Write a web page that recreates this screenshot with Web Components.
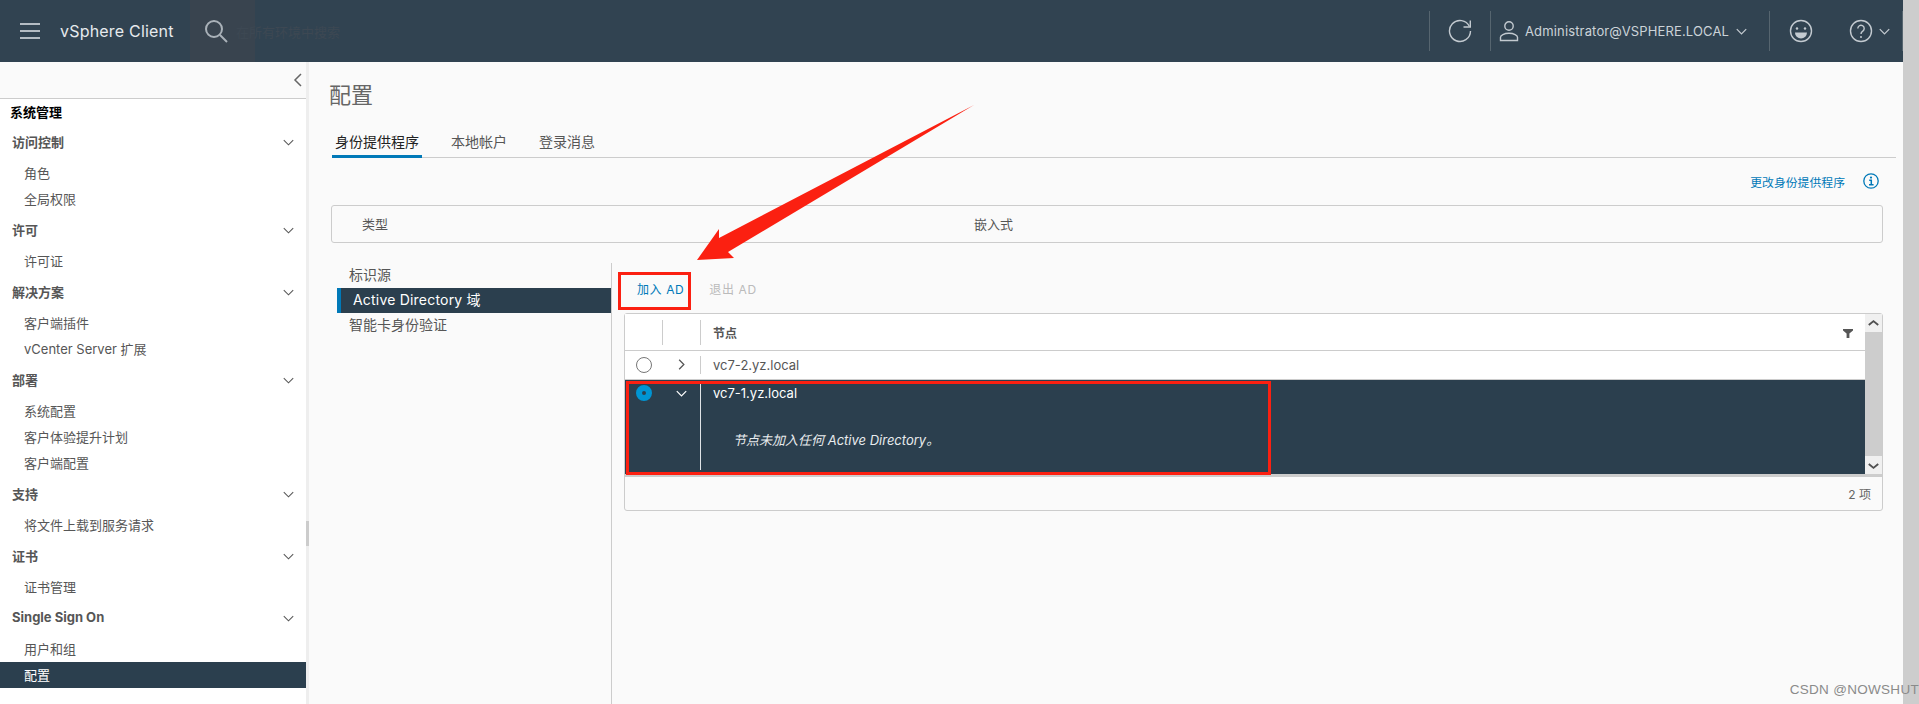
<!DOCTYPE html>
<html lang="zh-CN">
<head>
<meta charset="utf-8">
<title>vSphere Client</title>
<style>
    html, body {
        margin: 0;
        height: 704px;
        overflow: hidden;
        background: #fafafa;
        font-family: Inter, "Noto Sans CJK SC", sans-serif;
    }
</style>
</head>
<body>
<vs-app>
    <vs-header slot="header"></vs-header>
    <vs-sidebar slot="sidebar">
        <vs-nav-title>系统管理</vs-nav-title>
        <vs-nav-group label="访问控制"><vs-nav-item>角色</vs-nav-item><vs-nav-item>全局权限</vs-nav-item></vs-nav-group>
        <vs-nav-group label="许可"><vs-nav-item>许可证</vs-nav-item></vs-nav-group>
        <vs-nav-group label="解决方案"><vs-nav-item>客户端插件</vs-nav-item><vs-nav-item>vCenter Server 扩展</vs-nav-item></vs-nav-group>
        <vs-nav-group label="部署"><vs-nav-item>系统配置</vs-nav-item><vs-nav-item>客户体验提升计划</vs-nav-item><vs-nav-item>客户端配置</vs-nav-item></vs-nav-group>
        <vs-nav-group label="支持"><vs-nav-item>将文件上载到服务请求</vs-nav-item></vs-nav-group>
        <vs-nav-group label="证书"><vs-nav-item>证书管理</vs-nav-item></vs-nav-group>
        <vs-nav-group label="Single Sign On"><vs-nav-item>用户和组</vs-nav-item><vs-nav-item active>配置</vs-nav-item></vs-nav-group>
    </vs-sidebar>
    <vs-config-page slot="main"></vs-config-page>
</vs-app>
<vs-annotations></vs-annotations>

<script>
// Small chevron used all over the page, direction given by the points
const chevron = (points, color, size = 14, width = 1.5) => `
    <svg width="${size}" height="${size}" viewBox="0 0 14 14" fill="none" stroke="${color}" stroke-width="${width}">
        <polyline points="${points}"></polyline>
    </svg>`;
const CHEVRON_DOWN = '1,4 7,10 13,4';
const CHEVRON_RIGHT = '4,1 10,7 4,13';
const CHEVRON_LEFT = '10,1 4,7 10,13';

// Page frame: header, sidebar, main area and the window scrollbar
class VsApp extends HTMLElement {
    constructor() {
        super();
        this.attachShadow({ mode: 'open' });
        this.shadowRoot.innerHTML = `
            <style>
                :host {
                    display: grid;
                    grid-template-columns: 1fr 16px;
                    height: 704px;
                }
                .page {
                    display: flex;
                    flex-direction: column;
                    min-width: 0;
                }
                .body {
                    flex: 1;
                    display: flex;
                    min-height: 0;
                }
                .scrollbar {
                    background: #cdcdcd;
                }
            </style>
            <div class="page">
                <slot name="header"></slot>
                <div class="body">
                    <slot name="sidebar"></slot>
                    <slot name="main"></slot>
                </div>
            </div>
            <div class="scrollbar"></div>
        `;
    }
}

class VsHeader extends HTMLElement {
    constructor() {
        super();
        this.attachShadow({ mode: 'open' });
        this.shadowRoot.innerHTML = `
            <style>
                :host {
                    display: flex;
                    align-items: center;
                    height: 62px;
                    background: #314351;
                    color: #e6eaed;
                    flex: none;
                }
                .burger {
                    width: 20px;
                    margin: 0 20px;
                    display: flex;
                    flex-direction: column;
                    gap: 5.5px;
                }
                .burger i {
                    display: block;
                    height: 1.5px;
                    background: #b4bcc3;
                }
                .brand {
                    font-size: 16px;
                    width: 130px;
                    letter-spacing: 0.2px;
                }
                .search {
                    width: 65px;
                    height: 62px;
                    background: #39444f;
                    display: flex;
                    align-items: center;
                    padding-left: 14px;
                    box-sizing: border-box;
                }
                .placeholder {
                    flex: 1;
                    margin-left: -19px;
                    font-size: 13px;
                    color: #3d4853;
                }
                .sep {
                    width: 1px;
                    height: 40px;
                    background: #56656f;
                    flex: none;
                }
                .refresh {
                    width: 60px;
                    display: flex;
                    justify-content: center;
                }
                .user {
                    width: 278px;
                    display: flex;
                    align-items: center;
                    padding-left: 8px;
                    box-sizing: border-box;
                    font-size: 13px;
                    letter-spacing: 0.15px;
                    color: #ccd3d8;
                }
                .user span {
                    margin: 0 7px 0 6px;
                    white-space: nowrap;
                }
                .smile {
                    width: 61px;
                    display: flex;
                    justify-content: center;
                }
                .help {
                    width: 71px;
                    display: flex;
                    align-items: center;
                    padding-left: 18px;
                    box-sizing: border-box;
                    gap: 6px;
                }
                svg {
                    display: block;
                }
            </style>
            <div class="burger"><i></i><i></i><i></i></div>
            <div class="brand">vSphere Client</div>
            <div class="search">
                <svg width="24" height="24" viewBox="0 0 24 24" fill="none" stroke="#aab2b9" stroke-width="2">
                    <circle cx="10" cy="10" r="8"></circle>
                    <line x1="16" y1="16" x2="23" y2="23"></line>
                </svg>
            </div>
            <div class="placeholder">在所有环境中搜索</div>
            <div class="sep"></div>
            <div class="refresh">
                <svg width="24" height="24" viewBox="0 0 24 24" fill="none" stroke="#c3cad0" stroke-width="1.4">
                    <path d="M21.5 7.5A10.5 10.5 0 1 0 22.5 12"></path>
                    <polyline points="22.3,1.5 22.3,8 15.5,8"></polyline>
                </svg>
            </div>
            <div class="sep"></div>
            <div class="user">
                <svg width="20" height="22" viewBox="0 0 20 22" fill="none" stroke="#c3cad0" stroke-width="1.4">
                    <circle cx="10" cy="6" r="4.2"></circle>
                    <path d="M1.5 20.5v-3.2c0-2 3.5-4 8.5-4s8.5 2 8.5 4v3.2z"></path>
                </svg>
                <span>Administrator@VSPHERE.LOCAL</span>
                ${chevron(CHEVRON_DOWN, '#c3cad0', 11, 1.6)}
            </div>
            <div class="sep"></div>
            <div class="smile">
                <svg width="24" height="24" viewBox="0 0 24 24" fill="none" stroke="#c3cad0" stroke-width="1.4">
                    <circle cx="12" cy="12" r="10.5"></circle>
                    <circle cx="8" cy="9.5" r="1.2" fill="#c3cad0" stroke="none"></circle>
                    <circle cx="16" cy="9.5" r="1.2" fill="#c3cad0" stroke="none"></circle>
                    <path d="M6 13.5h12a6 6 0 0 1-12 0z" fill="#c3cad0" stroke="none"></path>
                </svg>
            </div>
            <div class="help">
                <svg width="24" height="24" viewBox="0 0 24 24" fill="none" stroke="#c3cad0" stroke-width="1.4">
                    <circle cx="12" cy="12" r="10.5"></circle>
                    <path d="M8.8 9.5a3.2 3.2 0 1 1 5 2.6c-1.2.8-1.8 1.3-1.8 3"></path>
                    <circle cx="12" cy="18" r="1" fill="#c3cad0" stroke="none"></circle>
                </svg>
                ${chevron(CHEVRON_DOWN, '#c3cad0', 11, 1.6)}
            </div>
            <div class="sep"></div>
        `;
    }
}

class VsSidebar extends HTMLElement {
    constructor() {
        super();
        this.attachShadow({ mode: 'open' });
        this.shadowRoot.innerHTML = `
            <style>
                :host {
                    display: flex;
                    width: 309px;
                    flex: none;
                    position: relative;
                }
                .panel {
                    width: 306px;
                    background: #fff;
                }
                .collapse {
                    height: 36px;
                    background: #fafafa;
                    border-bottom: 1px solid #ccc;
                    margin-bottom: 1px;
                    display: flex;
                    align-items: center;
                    justify-content: flex-end;
                    padding-right: 1px;
                }
                .track {
                    width: 3px;
                    background: #eee;
                    padding-top: 459px;
                    box-sizing: border-box;
                }
                .thumb {
                    height: 25px;
                    background: #ccc;
                }
                svg {
                    display: block;
                }
            </style>
            <div class="panel">
                <div class="collapse">${chevron(CHEVRON_LEFT, '#666', 14, 1.5)}</div>
                <slot></slot>
            </div>
            <div class="track"><div class="thumb"></div></div>
        `;
    }
}

class VsNavTitle extends HTMLElement {
    constructor() {
        super();
        this.attachShadow({ mode: 'open' });
        this.shadowRoot.innerHTML = `
            <style>
                :host {
                    display: block;
                    height: 24px;
                    line-height: 24px;
                    padding-left: 10px;
                    font-size: 13px;
                    font-weight: 700;
                    color: #000;
                }
            </style>
            <slot></slot>
        `;
    }
}

class VsNavGroup extends HTMLElement {
    constructor() {
        super();
        this.attachShadow({ mode: 'open' });
        this.shadowRoot.innerHTML = `
            <style>
                :host {
                    display: block;
                }
                .label {
                    display: flex;
                    align-items: center;
                    justify-content: space-between;
                    height: 36px;
                    padding: 0 12px;
                    font-size: 13px;
                    font-weight: 700;
                    color: #565656;
                }
                .label span {
                    margin-top: -2px;
                }
            </style>
            <div class="label">
                <span id="label"></span>
                ${chevron(CHEVRON_DOWN, '#565656', 11, 1.3)}
            </div>
            <slot></slot>
        `;
    }

    connectedCallback() {
        this.shadowRoot.getElementById('label').textContent = this.getAttribute('label') || '';
    }
}

class VsNavItem extends HTMLElement {
    constructor() {
        super();
        this.attachShadow({ mode: 'open' });
        this.shadowRoot.innerHTML = `
            <style>
                :host {
                    display: block;
                    height: 26px;
                    line-height: 26px;
                    padding-left: 24px;
                    font-size: 13px;
                    color: #565656;
                }
                :host([active]) {
                    background: #2b3f4e;
                    color: #fff;
                }
            </style>
            <slot></slot>
        `;
    }
}

// Content of the 配置 page
class VsConfigPage extends HTMLElement {
    constructor() {
        super();
        this.attachShadow({ mode: 'open' });
        this.shadowRoot.innerHTML = `
            <style>
                :host {
                    flex: 1;
                    min-width: 0;
                    display: flex;
                    flex-direction: column;
                    padding: 18px 7px 0 20px;
                    box-sizing: border-box;
                    color: #565656;
                }
                h1 {
                    margin: 0;
                    font-size: 22px;
                    font-weight: 400;
                    line-height: 30px;
                    color: #666;
                }
                .content {
                    flex: 1;
                    min-height: 0;
                    margin-left: 3px;
                    display: flex;
                    flex-direction: column;
                }
                .tabs {
                    margin-top: 16px;
                    height: 32px;
                    display: flex;
                    border-bottom: 1px solid #ccc;
                    box-sizing: border-box;
                    font-size: 14px;
                }
                .tab {
                    line-height: 31px;
                    height: 32px;
                    box-sizing: border-box;
                    padding: 0 3px;
                    margin-right: 26px;
                }
                .tab.active {
                    color: #222;
                    border-bottom: 3px solid #0079b8;
                }
                .inner {
                    flex: 1;
                    min-height: 0;
                    display: flex;
                    flex-direction: column;
                    margin-right: 13px;
                }
                .link {
                    margin-top: 11px;
                    height: 24px;
                    display: flex;
                    align-items: center;
                    justify-content: flex-end;
                    gap: 18px;
                    padding-right: 4px;
                    font-size: 11.85px;
                    color: #0079b8;
                }
                .type {
                    margin: 12px 0 0 -1px;
                    height: 38px;
                    box-sizing: border-box;
                    border: 1px solid #ccc;
                    border-radius: 3px;
                    padding-bottom: 2px;
                    display: flex;
                    align-items: center;
                    font-size: 13px;
                }
                .type .k {
                    width: 642px;
                    padding-left: 30px;
                    box-sizing: border-box;
                }
                .split {
                    flex: 1;
                    min-height: 0;
                    margin-top: 20px;
                    display: flex;
                }
                .side {
                    width: 274px;
                    margin-left: 5px;
                    font-size: 14px;
                    flex: none;
                }
                .side div {
                    height: 25px;
                    line-height: 24px;
                    padding-left: 12px;
                }
                .side .on {
                    background: #2b3f4e;
                    color: #fff;
                    border-left: 4px solid #0079b8;
                    padding-left: 12px;
                    letter-spacing: 0.2px;
                }
                .pane {
                    flex: 1;
                    min-width: 0;
                    border-left: 1px solid #ccc;
                    padding-left: 12px;
                }
                .actions {
                    height: 50px;
                    padding-top: 1px;
                    box-sizing: border-box;
                    display: flex;
                    align-items: center;
                    gap: 25px;
                    padding-left: 13px;
                    font-size: 12px;
                    letter-spacing: 0.6px;
                }
                .join { color: #0079b8; }
                .leave { color: #bbb; }
                svg { display: block; }
            </style>
            <h1>配置</h1>
            <div class="content">
                <div class="tabs">
                    <div class="tab active">身份提供程序</div>
                    <div class="tab">本地帐户</div>
                    <div class="tab">登录消息</div>
                </div>
                <div class="inner">
                    <div class="link">
                        <span>更改身份提供程序</span>
                        <svg width="16" height="16" viewBox="0 0 16 16" fill="none" stroke="#0079b8" stroke-width="1.3">
                            <circle cx="8" cy="8" r="7.2"></circle>
                            <circle cx="8" cy="4.6" r="1.1" fill="#0079b8" stroke="none"></circle>
                            <path d="M6.2 7.2H8.3V11.8M6 11.8h4.6" stroke-width="1.5"></path>
                        </svg>
                    </div>
                    <div class="type"><span class="k">类型</span><span>嵌入式</span></div>
                    <div class="split">
                        <div class="side">
                            <div>标识源</div>
                            <div class="on">Active Directory 域</div>
                            <div>智能卡身份验证</div>
                        </div>
                        <div class="pane">
                            <div class="actions">
                                <span class="join">加入 AD</span>
                                <span class="leave">退出 AD</span>
                            </div>
                            <vs-node-grid></vs-node-grid>
                        </div>
                    </div>
                </div>
            </div>
        `;
    }
}

class VsNodeGrid extends HTMLElement {
    constructor() {
        super();
        this.attachShadow({ mode: 'open' });
        this.shadowRoot.innerHTML = `
            <style>
                :host {
                    display: block;
                    height: 198px;
                    box-sizing: border-box;
                    border: 1px solid #ccc;
                    border-radius: 3px;
                    background: #fafafa;
                }
                .top {
                    display: flex;
                    height: 162px;
                }
                .rows {
                    flex: 1;
                    min-width: 0;
                    background: #fff;
                }
                .row {
                    display: grid;
                    grid-template-columns: 38px 37px 1px 1fr;
                }
                .head {
                    height: 36px;
                    border-bottom: 1px solid #ccc;
                    align-items: center;
                    position: relative;
                    grid-template-columns: 37px 1px 37px 1px 1fr;
                }
                .head .sep { height: 25px; }
                .head .name {
                    padding-left: 12px;
                    font-size: 12px;
                    font-weight: 700;
                    color: #565656;
                }
                .filter {
                    position: absolute;
                    right: 12px;
                    top: 15px;
                }
                .sep { background: #ccc; }
                .plain {
                    height: 27px;
                    padding-bottom: 1px;
                    align-items: center;
                    border-bottom: 1px solid #ccc;
                }
                .plain .sep { height: 18px; }
                .name { padding-left: 12px; font-size: 13px; color: #565656; }
                .selected {
                    height: 94px;
                    background: #2b3f4e;
                    color: #fff;
                    position: relative;
                    align-items: start;
                }
                .selected .sep {
                    height: 86px;
                    margin-top: 4px;
                    background: #dfe3e6;
                }
                .selected .name { color: #fff; padding-top: 5px; line-height: 16px; }
                .note {
                    margin: 30px 0 0 32px;
                    font-size: 13px;
                    line-height: 18px;
                    font-style: italic;
                    color: #e8ebed;
                }
                .cell {
                    display: flex;
                    justify-content: center;
                }
                .selected .cell { padding-top: 5px; }
                .selected .cell.arrow { padding-top: 8px; }
                .radio {
                    width: 16px;
                    height: 16px;
                    border-radius: 50%;
                    box-sizing: border-box;
                    border: 1px solid #777;
                    background: #fff;
                }
                .radio.on {
                    border: 6px solid #0095d3;
                    background: #2b3f4e;
                }
                .gutter {
                    height: 2px;
                    background: #ccc;
                }
                .bar {
                    width: 17px;
                    background: #cdcdcd;
                    display: flex;
                    flex-direction: column;
                    justify-content: space-between;
                    padding-bottom: 2px;
                    box-sizing: border-box;
                }
                .btn {
                    height: 18px;
                    background: #f0f0f0;
                    display: flex;
                    align-items: center;
                    justify-content: center;
                }
                .foot {
                    height: 34px;
                    border-top: 1px solid #ccc;
                    box-sizing: border-box;
                    display: flex;
                    align-items: center;
                    justify-content: flex-end;
                    padding-right: 11px;
                    font-size: 12px;
                    color: #666;
                }
                svg { display: block; }
            </style>
            <div class="top">
                <div class="rows">
                    <div class="row head">
                        <span></span><span class="sep"></span><span></span><span class="sep"></span>
                        <span class="name">节点</span>
                        <svg class="filter" width="10" height="9" viewBox="0 0 10 9"><path d="M0 0h10v1.6L6.4 4.6V9H3.6V4.6L0 1.6z" fill="#565656"></path></svg>
                    </div>
                    <div class="row plain">
                        <span class="cell"><span class="radio"></span></span>
                        <span class="cell">${chevron(CHEVRON_RIGHT, '#565656', 11, 1.6)}</span>
                        <span class="sep"></span>
                        <span class="name">vc7-2.yz.local</span>
                    </div>
                    <div class="row selected">
                        <span class="cell"><span class="radio on"></span></span>
                        <span class="cell arrow">${chevron(CHEVRON_DOWN, '#fff', 11, 1.6)}</span>
                        <span class="sep"></span>
                        <div>
                            <div class="name">vc7-1.yz.local</div>
                            <div class="note">节点未加入任何 Active Directory。</div>
                        </div>
                    </div>
                    <div class="gutter"></div>
                </div>
                <div class="bar">
                    <div class="btn">${chevron('1,9 7,4 13,9', '#505050', 11, 2.4)}</div>
                    <div class="btn">${chevron('1,5 7,10 13,5', '#505050', 11, 2.4)}</div>
                </div>
            </div>
            <div class="foot">2 项</div>
        `;
    }
}

// Red marks somebody drew on top of the screenshot, plus the watermark
class VsAnnotations extends HTMLElement {
    constructor() {
        super();
        this.attachShadow({ mode: 'open' });
        this.shadowRoot.innerHTML = `
            <style>
                :host {
                    position: absolute;
                    left: 0;
                    top: 0;
                    width: 1919px;
                    height: 704px;
                    pointer-events: none;
                    overflow: hidden;
                }
                svg {
                    position: absolute;
                    left: 0;
                    top: 0;
                }
                .box {
                    position: absolute;
                    box-sizing: border-box;
                    border: 3px solid #fb2011;
                }
                .mark {
                    position: absolute;
                    right: 0;
                    top: 682px;
                    font: 13.5px "Liberation Sans", sans-serif;
                    letter-spacing: 0.3px;
                    color: #8a8a8a;
                    white-space: nowrap;
                }
            </style>
            <svg width="1919" height="704">
                <polygon fill="#fb2011" points="974,105 728,252 734,258 697,260 719,229 719,238"></polygon>
            </svg>
            <div class="box" style="left:618px;top:272px;width:73px;height:38px"></div>
            <div class="box" style="left:626px;top:381px;width:645px;height:94px"></div>
            <div class="mark">CSDN @NOWSHUT</div>
        `;
    }
}

// Register the custom elements
customElements.define('vs-app', VsApp);
customElements.define('vs-header', VsHeader);
customElements.define('vs-sidebar', VsSidebar);
customElements.define('vs-nav-title', VsNavTitle);
customElements.define('vs-nav-group', VsNavGroup);
customElements.define('vs-nav-item', VsNavItem);
customElements.define('vs-config-page', VsConfigPage);
customElements.define('vs-node-grid', VsNodeGrid);
customElements.define('vs-annotations', VsAnnotations);
</script>
</body>
</html>
